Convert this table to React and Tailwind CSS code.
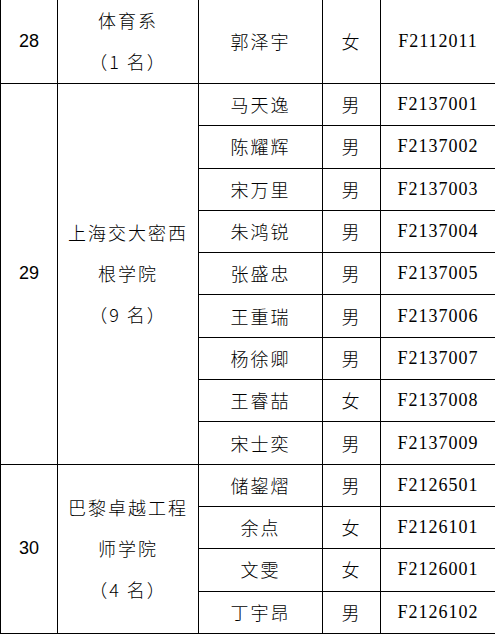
import React from 'react';

const groups = [
  {
    no: '28',
    college: ['体育系', '（1 名）'],
    tall: true,
    students: [['郭泽宇', '女', 'F2112011']],
  },
  {
    no: '29',
    college: ['上海交大密西', '根学院', '（9 名）'],
    students: [
      ['马天逸', '男', 'F2137001'],
      ['陈耀辉', '男', 'F2137002'],
      ['宋万里', '男', 'F2137003'],
      ['朱鸿锐', '男', 'F2137004'],
      ['张盛忠', '男', 'F2137005'],
      ['王重瑞', '男', 'F2137006'],
      ['杨徐卿', '男', 'F2137007'],
      ['王睿喆', '女', 'F2137008'],
      ['宋士奕', '男', 'F2137009'],
    ],
  },
  {
    no: '30',
    college: ['巴黎卓越工程', '师学院', '（4 名）'],
    students: [
      ['储鋆熠', '男', 'F2126501'],
      ['余点', '女', 'F2126101'],
      ['文雯', '女', 'F2126001'],
      ['丁宇昂', '男', 'F2126102'],
    ],
  },
];

const cjk = "font-['Noto_Sans_CJK_SC',sans-serif] font-light text-[18px] tracking-[2px] text-black";
const cell = 'border border-black text-center align-middle p-0';

const App = () => {
  return (
    <div className="w-[495px] h-[634px] overflow-hidden bg-white">
      <table className="border-collapse table-fixed w-[495px] -mt-[2px]">
        <colgroup>
          <col className="w-[57px]" />
          <col className="w-[141px]" />
          <col className="w-[124px]" />
          <col className="w-[58px]" />
          <col className="w-[115px]" />
        </colgroup>
        <tbody>
          {groups.map((g) =>
            g.students.map((s, i) => (
              <tr key={g.no + s[2]} className={g.tall ? 'h-[85px]' : 'h-[42.3px]'}>
                {i === 0 && (
                  <>
                    <td
                      rowSpan={g.students.length}
                      className={`${cell} font-['Liberation_Sans',sans-serif] text-[18px] text-black`}
                    >
                      {g.no}
                    </td>
                    <td rowSpan={g.students.length} className={`${cell} ${cjk} leading-[41px]`}>
                      {g.college.map((line) => (
                        <div key={line}>{line}</div>
                      ))}
                    </td>
                  </>
                )}
                <td className={`${cell} ${cjk}`}>{s[0]}</td>
                <td className={`${cell} ${cjk}`}>{s[1]}</td>
                <td className={`${cell} font-['Liberation_Serif',serif] text-[18px] tracking-[1px] text-black`}>
                  {s[2]}
                </td>
              </tr>
            ))
          )}
        </tbody>
      </table>
    </div>
  );
};

export default App;
